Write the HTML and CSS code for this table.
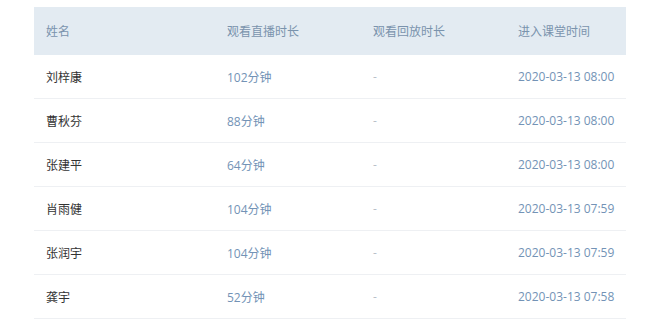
FILE: index.html
```html
<!DOCTYPE html>
<html lang="zh">
<head>
<meta charset="utf-8">
<link rel="stylesheet" href="styles.css">
</head>
<body>
<div class="wrap">
<table class="grid">
<colgroup><col class="c1"><col class="c2"><col class="c3"><col class="c4"></colgroup>
<thead>
<tr><th>姓名</th><th>观看直播时长</th><th>观看回放时长</th><th>进入课堂时间</th></tr>
</thead>
<tbody>
<tr><td class="name">刘梓康</td><td class="val">102分钟</td><td class="dash">-</td><td class="val">2020-03-13 08:00</td></tr>
<tr><td class="name">曹秋芬</td><td class="val">88分钟</td><td class="dash">-</td><td class="val">2020-03-13 08:00</td></tr>
<tr><td class="name">张建平</td><td class="val">64分钟</td><td class="dash">-</td><td class="val">2020-03-13 08:00</td></tr>
<tr><td class="name">肖雨健</td><td class="val">104分钟</td><td class="dash">-</td><td class="val">2020-03-13 07:59</td></tr>
<tr><td class="name">张润宇</td><td class="val">104分钟</td><td class="dash">-</td><td class="val">2020-03-13 07:59</td></tr>
<tr><td class="name">龚宇</td><td class="val">52分钟</td><td class="dash">-</td><td class="val">2020-03-13 07:58</td></tr>
</tbody>
</table>
</div>
</body>
</html>
```
FILE: styles.css
```css
html, body { margin: 0; padding: 0; background: #fff; }
body {
  font-family: "Open Sans", "Noto Sans CJK SC", sans-serif;
  font-size: 12px;
}
.wrap { padding: 7px 25px 0 34px; }
.grid {
  width: 592px;
  border-collapse: collapse;
  table-layout: fixed;
}
.c1 { width: 181px; }
.c2 { width: 146px; }
.c3 { width: 145px; }
.c4 { width: 120px; }
.grid th {
  background: #e3ebf2;
  color: #7a93ad;
  font-weight: normal;
  text-align: left;
  height: 48px;
  padding: 0 12px;
}
.grid td {
  height: 43px;
  padding: 0 12px;
  border-bottom: 1px solid #eef0f3;
  white-space: nowrap;
}
.name { color: #333; }
.val { color: #7393b6; }
.dash { color: #b8c0c8; }
```
